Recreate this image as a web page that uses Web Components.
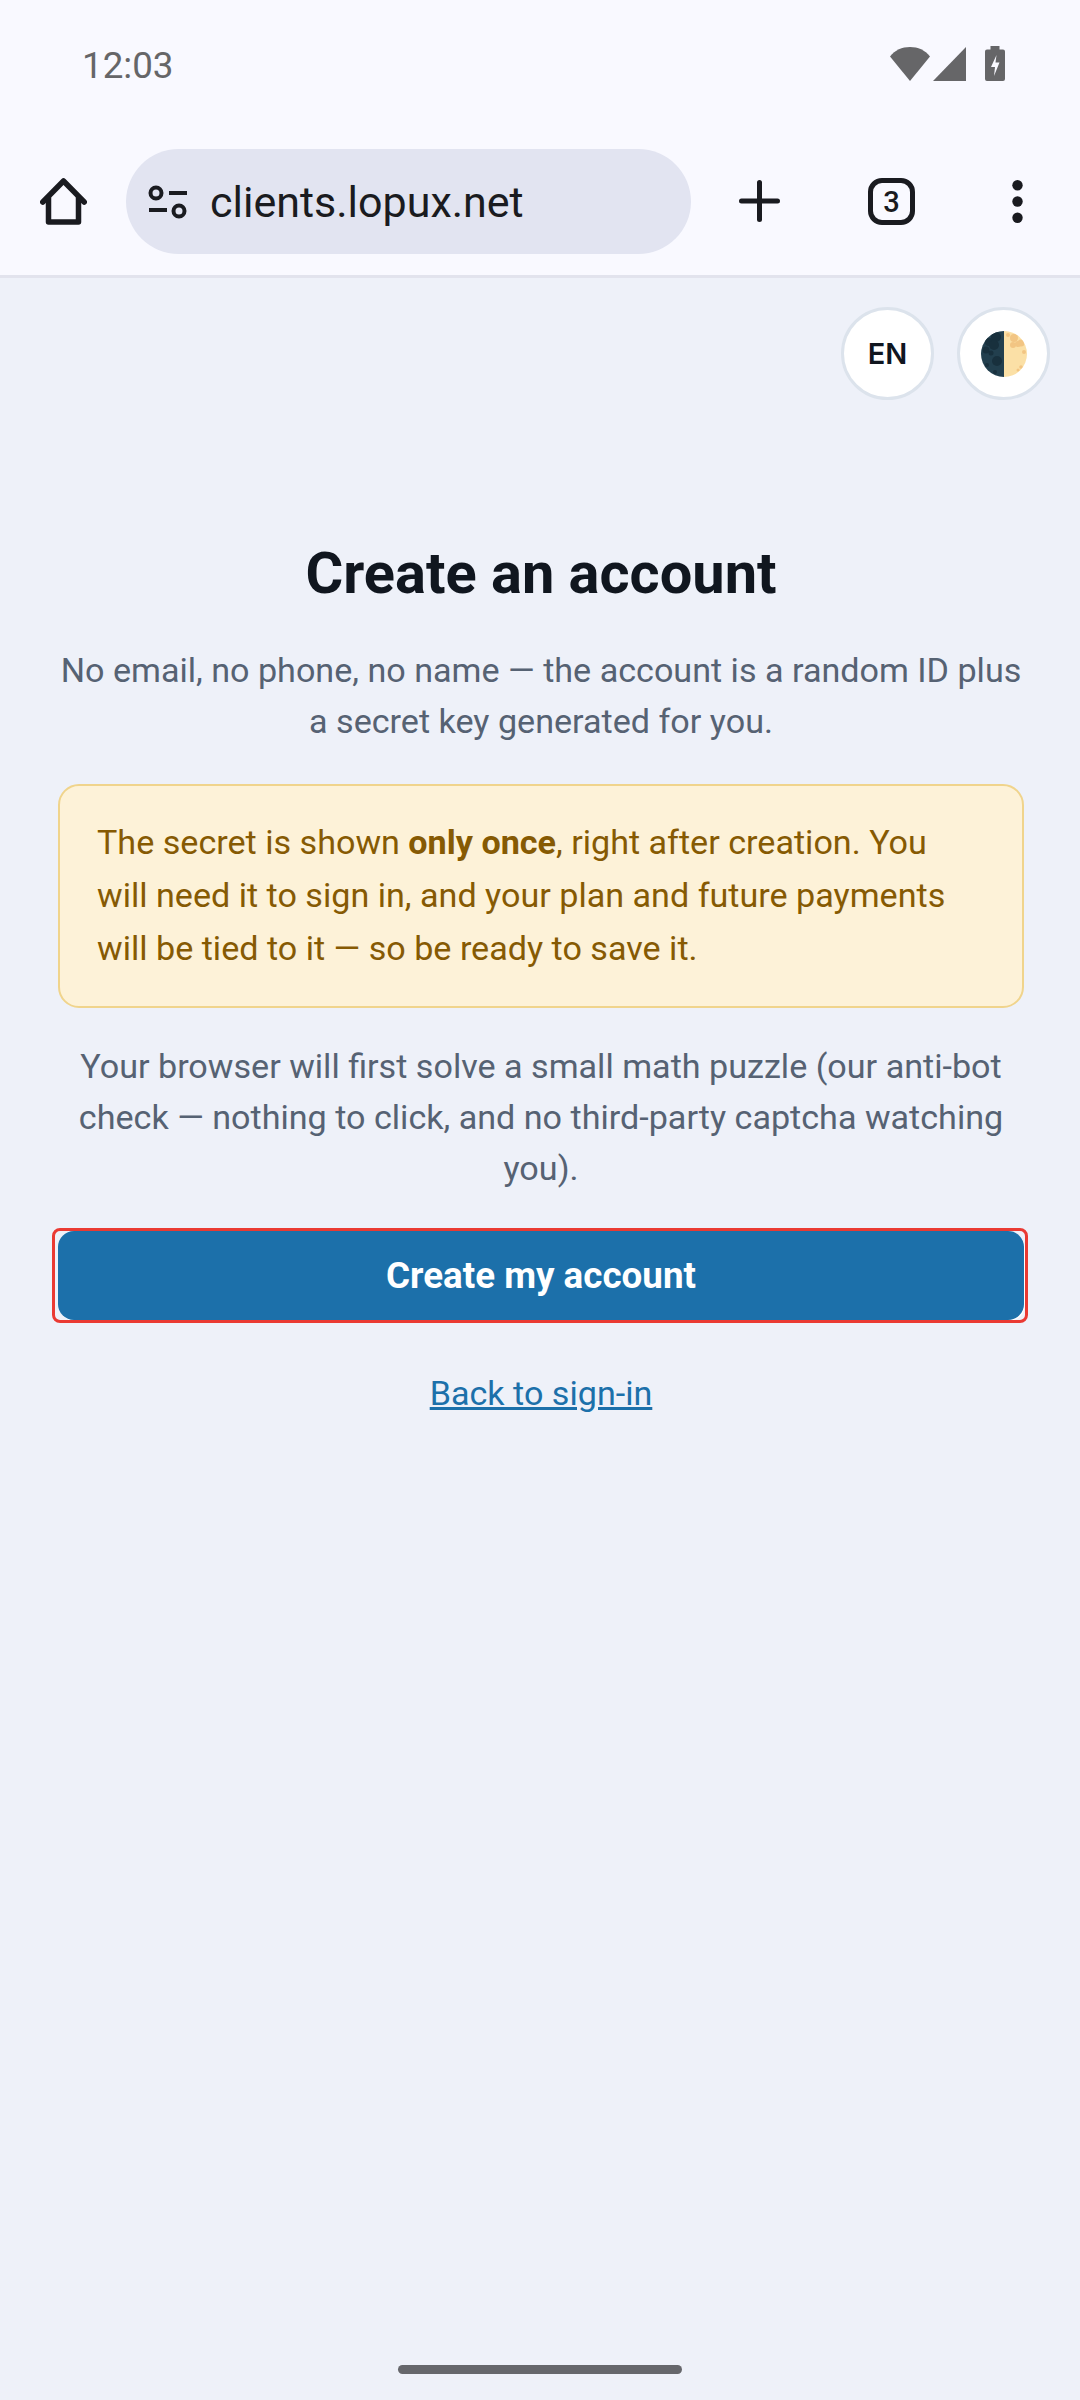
<!DOCTYPE html>
<html lang="en">
<head>
<meta charset="utf-8">
<title>Create an account</title>
<style>
  html, body { margin: 0; padding: 0; }
  body {
    width: 1080px;
    height: 2400px;
    overflow: hidden;
    background: #eef1f9;
    font-family: Roboto, sans-serif;
    display: flex;
    flex-direction: column;
  }
</style>
</head>
<body>
  <status-bar></status-bar>
  <browser-toolbar url="clients.lopux.net" tabs="3"></browser-toolbar>
  <page-controls></page-controls>
  <signup-panel>
    <span slot="title">Create an account</span>
    <span slot="intro">No email, no phone, no name — the account is a random ID plus a secret key generated for you.</span>
    <warning-box>The secret is shown <b>only once</b>, right after creation. You will need it to sign in, and your plan and future payments will be tied to it — so be ready to save it.</warning-box>
    <span slot="note">Your browser will first solve a small math puzzle (our anti-bot check — nothing to click, and no third-party captcha watching you).</span>
    <span slot="action">Create my account</span>
    <span slot="link">Back to sign-in</span>
  </signup-panel>
  <gesture-bar></gesture-bar>

<script>
class StatusBar extends HTMLElement {
  connectedCallback () {
    this.attachShadow({ mode: 'open' }).innerHTML = `
      <style>
        :host {
          display: flex;
          justify-content: space-between;
          align-items: center;
          height: 149px;
          box-sizing: border-box;
          padding: 0 75px 22px 82px;
          background: #f9f9ff;
          color: #666668;
          font: 400 36.750px Roboto, sans-serif;
        }
        .time { padding-top: 3px; }
        .icons { display: flex; align-items: center; gap: 3px; height: 36px; }
        svg { display: block; fill: #666668; }
      </style>
      <span class="time">12:03</span>
      <div class="icons">
        <svg width="40" height="34" viewBox="0 0 40 34"><path d="M0 9.500C5 3 12 0 20 0s15 3 20 9.500L20 34Z"/></svg>
        <svg width="33" height="34" viewBox="0 0 33 34" style="margin-right:16px"><path d="M33 0V34H0Z"/></svg>
        <svg width="20" height="35" viewBox="0 0 20 35"><path d="M5.500 0h9v3.500H18q2 0 2 2V33q0 2-2 2H2q-2 0-2-2V5.500q0-2 2-2h3.500Z"/><path fill="#f9f9ff" d="M11.500 9 6 21h4l-1 9 5.500-13.500H10.500Z"/></svg>
      </div>`
  }
}

class BrowserToolbar extends HTMLElement {
  connectedCallback () {
    const url = this.getAttribute('url')
    const tabs = this.getAttribute('tabs')
    this.attachShadow({ mode: 'open' }).innerHTML = `
      <style>
        :host {
          display: flex;
          align-items: flex-start;
          height: 129px;
          box-sizing: border-box;
          background: #f9f9ff;
          border-bottom: 3px solid #e2e3ed;
        }
        svg { display: block; flex: none; }
        .home { margin: 29px 0 0 40px; width: 47px; height: 47px; }
        .pill {
          margin-left: 39px;
          flex: none;
          width: 565px;
          height: 105px;
          border-radius: 53px;
          background: #e2e4f1;
          display: flex;
          align-items: center;
          box-sizing: border-box;
          padding-left: 22px;
          gap: 23px;
          color: #1a1b20;
          font: 400 43px Roboto, sans-serif;
        }
        .plus { margin: 31px 0 0 48px; }
        .tabs { margin: 29px 0 0 88px; flex: none; }
        .tabs span {
          box-sizing: border-box;
          display: flex;
          align-items: center;
          justify-content: center;
          width: 47px;
          height: 47px;
          border: 5px solid #1a1b20;
          border-radius: 14px;
          color: #1a1b20;
          font: 500 29px Roboto, sans-serif;
        }
        .more { margin: 31px 0 0 97px; }
      </style>
      <svg class="home" viewBox="0 0 47 47" fill="none" stroke="#1a1b20" stroke-width="5.500" stroke-linejoin="round" stroke-linecap="round"><path d="M2.800 24 23.500 3l20.700 21"/><path d="M8.500 20V44H38.500V20"/></svg>
      <div class="pill">
        <svg width="39" height="34" viewBox="0 0 39 34" fill="none" stroke="#1a1b20" stroke-width="4"><circle cx="8" cy="8" r="5.500"/><path d="M21 8h18"/><path d="M1 25h18"/><circle cx="31" cy="26" r="5.500"/></svg>
        <span>${url}</span>
      </div>
      <svg class="plus" width="41" height="42" viewBox="0 0 41 42" fill="none" stroke="#1a1b20" stroke-width="5" stroke-linecap="round"><path d="M20.500 2.500V39.500M2.500 21H38.500"/></svg>
      <div class="tabs"><span>${tabs}</span></div>
      <svg class="more" width="11" height="43" viewBox="0 0 11 43" fill="#1a1b20"><circle cx="5.500" cy="5.300" r="5.200"/><circle cx="5.500" cy="21.500" r="5.200"/><circle cx="5.500" cy="37.700" r="5.200"/></svg>`
  }
}

class PageControls extends HTMLElement {
  connectedCallback () {
    this.attachShadow({ mode: 'open' }).innerHTML = `
      <style>
        :host {
          display: flex;
          justify-content: flex-end;
          gap: 23px;
          padding: 29px 30px 0 0;
        }
        .round {
          box-sizing: border-box;
          width: 93px;
          height: 93px;
          border-radius: 50%;
          background: #fff;
          border: 3px solid #dce3ec;
          display: flex;
          align-items: center;
          justify-content: center;
          color: #10161f;
          font: 600 29px Inter, Roboto, sans-serif;
        }
        svg { display: block; }
      </style>
      <div class="round">EN</div>
      <div class="round">
        <svg width="46" height="46" viewBox="0 0 46 46">
          <defs><clipPath id="disc"><circle cx="23" cy="23" r="23"/></clipPath></defs>
          <g clip-path="url(#disc)">
            <rect width="23" height="46" fill="#223f4e"/>
            <rect x="23" width="23" height="46" fill="#fbe0a6"/>
            <g fill="#18303d">
              <circle cx="15" cy="6" r="5"/><circle cx="8" cy="11" r="4"/><circle cx="13" cy="14" r="5"/><circle cx="5" cy="19" r="3.500"/><circle cx="10" cy="22" r="2.500"/><circle cx="16" cy="30" r="5"/><circle cx="14" cy="41" r="2"/><circle cx="6" cy="34" r="2"/>
            </g>
            <g fill="#f2c583">
              <circle cx="33" cy="7" r="4"/><circle cx="40" cy="12" r="3.500"/><circle cx="32" cy="14" r="3"/><circle cx="37" cy="13" r="3"/><circle cx="43" cy="21" r="2"/><circle cx="27" cy="4" r="2"/><circle cx="40" cy="36" r="1.800"/><circle cx="37" cy="39" r="1.500"/>
            </g>
          </g>
        </svg>
      </div>`
  }
}

class WarningBox extends HTMLElement {
  connectedCallback () {
    this.attachShadow({ mode: 'open' }).innerHTML = `
      <style>
        :host {
          display: block;
          box-sizing: border-box;
          width: 966px;
          height: 224px;
          padding: 30px 39px 0 37px;
          background: #fdf2d8;
          border: 2px solid #f0d48c;
          border-radius: 21px;
          color: #865a03;
          font-size: 34.125px;
          line-height: 53px;
          text-align: left;
        }
        ::slotted(b) { font-weight: 700; }
      </style>
      <slot></slot>`
  }
}

class SignupPanel extends HTMLElement {
  connectedCallback () {
    this.attachShadow({ mode: 'open' }).innerHTML = `
      <style>
        :host {
          display: flex;
          flex-direction: column;
          align-items: center;
          padding: 0 56px 0 58px;
          text-align: center;
          color: #566273;
          font-size: 34.125px;
          line-height: 51px;
        }
        h1 {
          margin: 141px 0 0;
          color: #10161f;
          font-size: 57.750px;
          line-height: 64px;
          font-weight: 700;
        }
        .intro { margin: 40px 0 0; width: 966px; }
        .box { margin-top: 37px; }
        .note { margin: 33px 0 0; width: 946px; }
        .action { position: relative; margin-top: 37px; }
        button {
          display: block;
          width: 966px;
          height: 89px;
          border: 0;
          padding: 0;
          border-radius: 16px;
          background: #1c70aa;
          box-shadow: 1px 1px 0 #fff;
          color: #fff;
          font: 700 36.750px Roboto, sans-serif;
        }
        .ring {
          position: absolute;
          inset: -3px -4px -3px -6px;
          border: 3px solid #ea3a33;
          border-radius: 8px;
          pointer-events: none;
        }
        a {
          margin-top: 48px;
          color: #1c70aa;
          text-decoration: underline;
        }
      </style>
      <h1><slot name="title"></slot></h1>
      <p class="intro"><slot name="intro"></slot></p>
      <div class="box"><slot></slot></div>
      <p class="note"><slot name="note"></slot></p>
      <div class="action">
        <button><slot name="action"></slot></button>
        <span class="ring"></span>
      </div>
      <a href="#"><slot name="link"></slot></a>`
  }
}

class GestureBar extends HTMLElement {
  connectedCallback () {
    this.attachShadow({ mode: 'open' }).innerHTML = `
      <style>
        :host {
          display: flex;
          justify-content: center;
          align-items: flex-end;
          flex: 1;
          padding-bottom: 26px;
        }
        div { width: 284px; height: 9px; border-radius: 5px; background: #66676c; }
      </style>
      <div></div>`
  }
}

customElements.define('status-bar', StatusBar)
customElements.define('browser-toolbar', BrowserToolbar)
customElements.define('page-controls', PageControls)
customElements.define('warning-box', WarningBox)
customElements.define('signup-panel', SignupPanel)
customElements.define('gesture-bar', GestureBar)
</script>
</body>
</html>
